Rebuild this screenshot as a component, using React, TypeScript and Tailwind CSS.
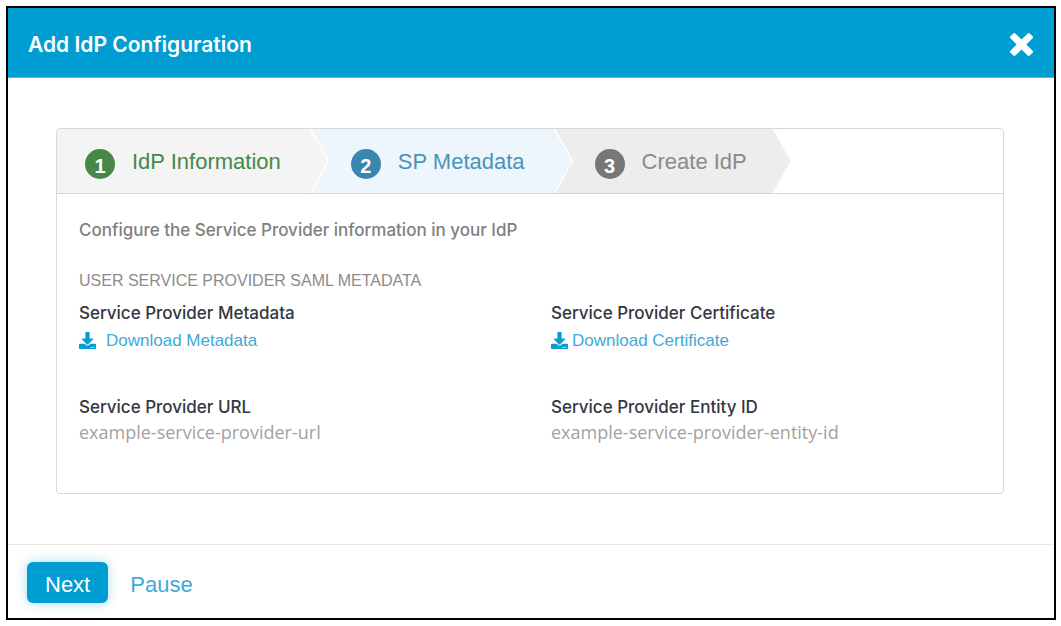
import { FaDownload } from "react-icons/fa";

type Step = {
  label: string;
  item: string;
  badge: string;
  arrow: string;
};

const steps: Step[] = [
  {
    label: "IdP Information",
    item: "bg-[#f4f4f4] pl-7 pr-[29px] text-[#468847]",
    badge: "bg-[#468847]",
    arrow: "fill-[#f4f4f4]",
  },
  {
    label: "SP Metadata",
    item: "bg-[#edf6fc] pl-[41px] pr-[29px] text-[#4a92ba]",
    badge: "bg-[#3a87ad]",
    arrow: "fill-[#edf6fc]",
  },
  {
    label: "Create IdP",
    item: "bg-[#ededed] pl-[41px] pr-[26px] text-[#8a8a8a]",
    badge: "bg-[#777777]",
    arrow: "fill-[#ededed]",
  },
];

function CloseIcon() {
  return (
    <svg aria-hidden="true" viewBox="206 434 1092 1092" className="size-[23px] fill-current">
      <path d="M1298 1322q0 28-20 48l-136 136q-20 20-48 20t-48-20l-294-294-294 294q-20 20-48 20t-48-20l-136-136q-20-20-20-48t20-48l294-294-294-294q-20-20-20-48t20-48l136-136q20-20 48-20t48 20l294 294 294-294q20-20 48-20t48 20l136 136q20 20 20 48t-20 48l-294 294 294 294q20 20 20 48z" />
    </svg>
  );
}

function Stepper() {
  return (
    <ol className="flex overflow-hidden rounded-t border-b border-[#d4d4d4]">
      {steps.map((step, index) => (
        <li
          key={step.label}
          aria-current={index === 1 ? "step" : undefined}
          className={`relative flex h-16 items-center gap-[17px] text-[22px] leading-8 ${step.item}`}
        >
          <span
            className={`mt-1.5 flex size-[30px] items-center justify-center rounded-full pt-1 text-xl font-bold text-white ${step.badge}`}
          >
            {index + 1}
          </span>
          <span className="whitespace-nowrap pt-0.5">{step.label}</span>
          <svg
            aria-hidden="true"
            viewBox="0 0 20 64"
            className={`absolute left-full top-0 z-10 h-16 w-5 ${step.arrow}`}
          >
            <path d="M-1 0H0L18 32L0 64H-1Z" />
            <path d="M0 -1L18.5 32L0 65" fill="none" stroke="#fff" strokeWidth="1.5" />
          </svg>
        </li>
      ))}
    </ol>
  );
}

function Download({ title, link, gap }: { title: string; link: string; gap: string }) {
  return (
    <section>
      <h3 className="font-['Inter',sans-serif] text-[17px] font-medium leading-7 text-[#333740]">{title}</h3>
      <a href="#download" className={`flex items-center text-[17px] leading-7 text-[#3fa9d8] ${gap}`}>
        <FaDownload className="mb-0.5 size-[17px] text-[#049fd2]" />
        {link}
      </a>
    </section>
  );
}

function Detail({ title, value }: { title: string; value: string }) {
  return (
    <section>
      <h3 className="font-['Inter',sans-serif] text-[17px] font-medium leading-7 text-[#333740]">{title}</h3>
      <p className="font-['Open_Sans',sans-serif] text-lg leading-[22px] text-[#a2a2a2]">{value}</p>
    </section>
  );
}

export default function App() {
  return (
    <div className="min-h-screen bg-white p-1.5 pr-[5px] font-['Liberation_Sans',Arial,sans-serif]">
      <div role="dialog" aria-labelledby="dialog-title" className="border-2 border-black bg-white">
        <header className="flex h-[70px] items-center justify-between border-b border-[#5bbce0] bg-[#009dd3] pl-5 pr-[21px] pt-1 text-white">
          <h1 id="dialog-title" className="font-['Inter',sans-serif] text-[21px] font-semibold leading-8">
            Add IdP Configuration
          </h1>
          <button type="button" aria-label="Close">
            <CloseIcon />
          </button>
        </header>

        <main className="pb-[50px] pl-12 pr-[50px] pt-[50px]">
          <div className="rounded border border-[#d8d8d8] px-[22px] pb-[50px]">
            <div className="-mx-[22px]">
              <Stepper />
            </div>
            <h2 className="pt-[22px] font-['Inter',sans-serif] text-[17px] font-medium leading-7 text-[#808080]">
              Configure the Service Provider information in your IdP
            </h2>
            <p className="pb-1 pt-[23px] text-base leading-7 text-[#8c8c8c]">
              USER SERVICE PROVIDER SAML METADATA
            </p>
            <div className="grid grid-cols-2 gap-x-[42px] gap-y-[38px]">
              <Download title="Service Provider Metadata" link="Download Metadata" gap="gap-2.5" />
              <Download title="Service Provider Certificate" link="Download Certificate" gap="gap-1" />
              <Detail title="Service Provider URL" value="example-service-provider-url" />
              <Detail title="Service Provider Entity ID" value="example-service-provider-entity-id" />
            </div>
          </div>
        </main>

        <footer className="flex h-[74px] items-center gap-[22px] border-t border-[#e8e8e8] px-[19px] pt-0.5 text-[22px] leading-8">
          <button
            type="button"
            className="h-[41px] rounded-md bg-[#009dd3] px-[18px] pt-1 text-white shadow-[0_0_12px_rgba(0,157,211,0.35)]"
          >
            Next
          </button>
          <button type="button" className="pt-1 text-[#3fa9d8]">
            Pause
          </button>
        </footer>
      </div>
    </div>
  );
}
